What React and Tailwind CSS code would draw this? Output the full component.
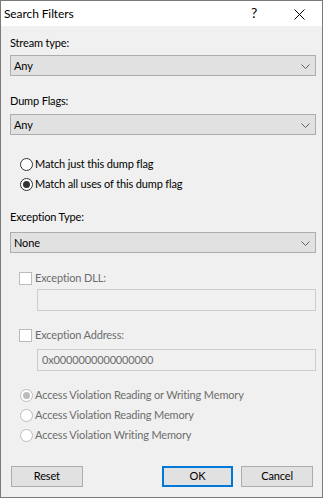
import React from "react";

const font = { fontFamily: 'Lato, "Noto Sans", sans-serif' };

function Chevron() {
  return (
    <svg width="9" height="6" viewBox="0 0 9 6" className="absolute right-[5px] top-[8px]">
      <path d="M0.5 0.5 L4.5 4.5 L8.5 0.5" fill="none" stroke="#606060" strokeWidth="1" />
    </svg>
  );
}

function Combo({ value }) {
  return (
    <div className="relative h-[21px] w-[306px] border border-[#adadad] bg-[#e1e1e1] pl-[3px] leading-[19px] text-black">
      {value}
      <Chevron />
    </div>
  );
}

function Radio({ checked, disabled, label }) {
  const border = disabled ? "border-[#bcbcbc]" : "border-[#333333]";
  return (
    <div className="flex h-[20px] items-center pl-[10px]">
      <div className={`flex h-[13px] w-[13px] items-center justify-center rounded-full border bg-white ${border}`}>
        {checked && (
          <div className={`h-[7px] w-[7px] rounded-full ${disabled ? "bg-[#bcbcbc]" : "bg-[#333333]"}`} />
        )}
      </div>
      <span className={`ml-[2px] leading-[16px] ${disabled ? "text-[#6d6d6d]" : "text-black"}`}>{label}</span>
    </div>
  );
}

function Check({ label }) {
  return (
    <div className="flex h-[16px] items-center pl-[9px]">
      <div className="h-[13px] w-[13px] border border-[#bcbcbc] bg-white" />
      <span className="ml-[3px] leading-[16px] text-[#6d6d6d]">{label}</span>
    </div>
  );
}

function TextBox({ value }) {
  return (
    <div className="ml-[27px] h-[22px] w-[279px] border border-[#cccccc] bg-[#f0f0f0] pl-[4px] leading-[20px] text-[#6d6d6d]">
      {value}
    </div>
  );
}

function Button({ children, primary, className = "" }) {
  return (
    <div
      className={`flex h-[21px] w-[72px] items-center justify-center bg-[#e1e1e1] text-black ${
        primary ? "border-2 border-[#0078d7]" : "border border-[#adadad]"
      } ${className}`}
    >
      {children}
    </div>
  );
}

export default function App() {
  return (
    <div style={font} className="h-[498px] w-[323px] border border-[#7a7a7a] bg-[#f0f0f0] text-black">
      <div className="relative flex h-[25px] items-center bg-white pl-[3px] text-[12px]">
        <span className="leading-[16px] tracking-[-0.1px]">Search Filters</span>
        <span className="absolute left-[250px] top-[4px] text-[14px] leading-[16px]">?</span>
        <svg width="11" height="11" viewBox="0 0 11 11" className="absolute left-[293px] top-[8px]">
          <path d="M0.5 0.5 L10.5 10.5 M10.5 0.5 L0.5 10.5" stroke="#000" strokeWidth="1" />
        </svg>
      </div>
      <div className="flex flex-col px-[9px] text-[11px] tracking-[-0.15px]">
        <div className="mt-[9px] h-[16px] leading-[16px]">Stream type:</div>
        <div className="mt-[4px]"><Combo value="Any" /></div>
        <div className="mt-[17px] h-[16px] leading-[16px]">Dump Flags:</div>
        <div className="mt-[5px]"><Combo value="Any" /></div>
        <div className="mt-[19px]">
          <Radio label="Match just this dump flag" />
          <Radio checked label="Match all uses of this dump flag" />
        </div>
        <div className="mt-[15px] h-[16px] leading-[16px]">Exception Type:</div>
        <div className="mt-[7px]"><Combo value="None" /></div>
        <div className="mt-[17px]"><Check label="Exception DLL:" /></div>
        <div className="mt-[3px]"><TextBox value="" /></div>
        <div className="mt-[16px]"><Check label="Exception Address:" /></div>
        <div className="mt-[6px]"><TextBox value="0x0000000000000000" /></div>
        <div className="mt-[14px]">
          <Radio disabled checked label="Access Violation Reading or Writing Memory" />
          <Radio disabled label="Access Violation Reading Memory" />
          <Radio disabled label="Access Violation Writing Memory" />
        </div>
        <div className="mt-[21px] flex">
          <Button className="ml-[1px]">Reset</Button>
          <Button primary className="ml-[79px]">OK</Button>
          <Button className="ml-[8px]">Cancel</Button>
        </div>
      </div>
    </div>
  );
}
